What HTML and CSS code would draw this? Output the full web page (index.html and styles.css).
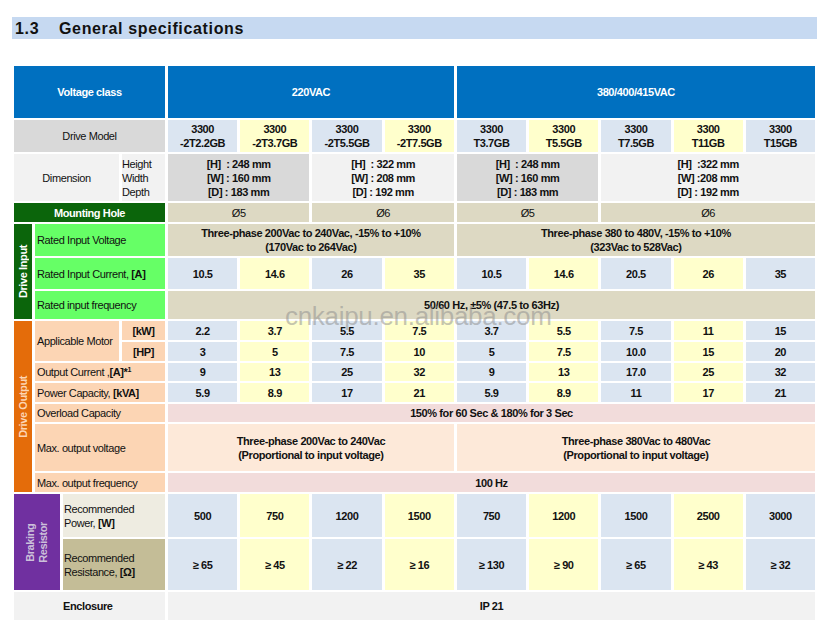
FILE: index.html
```html
<!DOCTYPE html>
<html>
<head>
<meta charset="utf-8">
<link rel="stylesheet" href="styles.css">
</head>
<body>
<div class="page">
  <h1 class="title"><span class="num">1.3</span><span>General specifications</span></h1>
  <div class="spec">
    <div class="hd s4"><span>Voltage class</span></div>
    <div class="hd s4"><span>220VAC</span></div>
    <div class="hd s5"><span>380/400/415VAC</span></div>

    <div class="lbl grey s4 center"><span>Drive Model</span></div>
    <div class="v b"><span>3300<br>-2T2.2GB</span></div>
    <div class="v y"><span>3300<br>-2T3.7GB</span></div>
    <div class="v b"><span>3300<br>-2T5.5GB</span></div>
    <div class="v y"><span>3300<br>-2T7.5GB</span></div>
    <div class="v b"><span>3300<br>T3.7GB</span></div>
    <div class="v y"><span>3300<br>T5.5GB</span></div>
    <div class="v b"><span>3300<br>T7.5GB</span></div>
    <div class="v y"><span>3300<br>T11GB</span></div>
    <div class="v b"><span>3300<br>T15GB</span></div>

    <div class="lbl light s3 center"><span>Dimension</span></div>
    <div class="lbl light hwd"><span>Height<br>Width<br>Depth</span></div>
    <div class="v g s2"><span>[H]&nbsp; : 248 mm<br>[W] : 160 mm<br>[D] : 183 mm</span></div>
    <div class="v l s2"><span>[H]&nbsp; : 322 mm<br>[W] : 208 mm<br>[D] : 192 mm</span></div>
    <div class="v g s2"><span>[H]&nbsp; : 248 mm<br>[W] : 160 mm<br>[D] : 183 mm</span></div>
    <div class="v l s3"><span>[H]&nbsp; :322 mm<br>[W] :208 mm<br>[D] : 192 mm</span></div>

    <div class="lbl mount s4 center"><span>Mounting Hole</span></div>
    <div class="v t s2 reg"><span>Ø5</span></div>
    <div class="v t s2 reg"><span>Ø6</span></div>
    <div class="v t s2 reg"><span>Ø5</span></div>
    <div class="v t s3 reg"><span>Ø6</span></div>

    <div class="side side-in"><span>Drive Input</span></div>
    <div class="lbl in s3"><span>Rated Input Voltage</span></div>
    <div class="v t s4"><span>Three-phase 200Vac to 240Vac, -15% to +10%<br>(170Vac to 264Vac)</span></div>
    <div class="v t s5"><span>Three-phase 380 to 480V, -15% to +10%<br>(323Vac to 528Vac)</span></div>
    <div class="lbl in s3"><span>Rated Input Current, <b>[A]</b></span></div>
    <div class="v b"><span>10.5</span></div>
    <div class="v y"><span>14.6</span></div>
    <div class="v b"><span>26</span></div>
    <div class="v y"><span>35</span></div>
    <div class="v b"><span>10.5</span></div>
    <div class="v y"><span>14.6</span></div>
    <div class="v b"><span>20.5</span></div>
    <div class="v y"><span>26</span></div>
    <div class="v b"><span>35</span></div>
    <div class="lbl in s3"><span>Rated input frequency</span></div>
    <div class="v t s9"><span>50/60 Hz, ±5% (47.5 to 63Hz)</span></div>

    <div class="side side-out"><span>Drive Output</span></div>
    <div class="lbl out motor"><span>Applicable Motor</span></div>
    <div class="lbl out unit"><span>[kW]</span></div>
    <div class="v b"><span>2.2</span></div>
    <div class="v y"><span>3.7</span></div>
    <div class="v b"><span>5.5</span></div>
    <div class="v y"><span>7.5</span></div>
    <div class="v b"><span>3.7</span></div>
    <div class="v y"><span>5.5</span></div>
    <div class="v b"><span>7.5</span></div>
    <div class="v y"><span>11</span></div>
    <div class="v b"><span>15</span></div>
    <div class="lbl out unit"><span>[HP]</span></div>
    <div class="v b"><span>3</span></div>
    <div class="v y"><span>5</span></div>
    <div class="v b"><span>7.5</span></div>
    <div class="v y"><span>10</span></div>
    <div class="v b"><span>5</span></div>
    <div class="v y"><span>7.5</span></div>
    <div class="v b"><span>10.0</span></div>
    <div class="v y"><span>15</span></div>
    <div class="v b"><span>20</span></div>
    <div class="lbl out s3"><span>Output Current ,<b>[A]*<sup>1</sup></b></span></div>
    <div class="v b"><span>9</span></div>
    <div class="v y"><span>13</span></div>
    <div class="v b"><span>25</span></div>
    <div class="v y"><span>32</span></div>
    <div class="v b"><span>9</span></div>
    <div class="v y"><span>13</span></div>
    <div class="v b"><span>17.0</span></div>
    <div class="v y"><span>25</span></div>
    <div class="v b"><span>32</span></div>
    <div class="lbl out s3"><span>Power Capacity, <b>[kVA]</b></span></div>
    <div class="v b"><span>5.9</span></div>
    <div class="v y"><span>8.9</span></div>
    <div class="v b"><span>17</span></div>
    <div class="v y"><span>21</span></div>
    <div class="v b"><span>5.9</span></div>
    <div class="v y"><span>8.9</span></div>
    <div class="v b"><span>11</span></div>
    <div class="v y"><span>17</span></div>
    <div class="v b"><span>21</span></div>
    <div class="lbl out s3"><span>Overload Capacity</span></div>
    <div class="v pink s9"><span>150% for 60 Sec &amp; 180% for 3 Sec</span></div>
    <div class="lbl out s3"><span>Max. output voltage</span></div>
    <div class="v peach s4"><span>Three-phase 200Vac to 240Vac<br>(Proportional to input voltage)</span></div>
    <div class="v peach s5"><span>Three-phase 380Vac to 480Vac<br>(Proportional to input voltage)</span></div>
    <div class="lbl out s3"><span>Max. output frequency</span></div>
    <div class="v pink s9"><span>100 Hz</span></div>

    <div class="side side-br"><span>Braking<br>Resistor</span></div>
    <div class="lbl rp s2"><span>Recommended<br>Power, <b>[W]</b></span></div>
    <div class="v b"><span>500</span></div>
    <div class="v y"><span>750</span></div>
    <div class="v b"><span>1200</span></div>
    <div class="v y"><span>1500</span></div>
    <div class="v b"><span>750</span></div>
    <div class="v y"><span>1200</span></div>
    <div class="v b"><span>1500</span></div>
    <div class="v y"><span>2500</span></div>
    <div class="v b"><span>3000</span></div>
    <div class="lbl rr s2"><span>Recommended<br>Resistance, <b>[Ω]</b></span></div>
    <div class="v b"><span>≥ 65</span></div>
    <div class="v y"><span>≥ 45</span></div>
    <div class="v b"><span>≥ 22</span></div>
    <div class="v y"><span>≥ 16</span></div>
    <div class="v b"><span>≥ 130</span></div>
    <div class="v y"><span>≥ 90</span></div>
    <div class="v b"><span>≥ 65</span></div>
    <div class="v y"><span>≥ 43</span></div>
    <div class="v b"><span>≥ 32</span></div>

    <div class="lbl light s4 enc"><span><b>Enclosure</b></span></div>
    <div class="v l s9"><span>IP 21</span></div>
    <div class="watermark">cnkaipu.en.alibaba.com</div>
  </div>
</div>
</body>
</html>
```

FILE: styles.css
```css
html, body {
  margin: 0;
  padding: 0;
  background: #ffffff;
}
body {
  font-family: "Liberation Sans", Arial, sans-serif;
  color: #111;
}
.page {
  width: 831px;
  padding-top: 17px;
}
.title {
  margin: 0 14px 0 12px;
  height: 22px;
  background: #c6d9f1;
  font-family: "Liberation Sans", Arial, sans-serif;
  font-weight: bold;
  font-size: 16px;
  letter-spacing: 0.65px;
  line-height: 24px;
  color: #111;
  display: flex;
  padding-left: 3px;
}
.title .num {
  width: 44px;
}
.spec {
  position: relative;
  margin: 27px 0 0 14px;
  width: 801px;
  display: grid;
  grid-template-columns: 18px 25px 56px 43px repeat(9, 1fr);
  grid-template-rows: 52px 32px 47px 19px 32px 31px 28px 19px 19px 18px 19px 18px 47px 19px 43px 51px 28px;
  column-gap: 3px;
  row-gap: 2px;
  font-size: 11px;
  letter-spacing: -0.4px;
  line-height: 14px;
}
.spec > div {
  display: flex;
  align-items: center;
}
.s2 { grid-column: span 2; }
.s3 { grid-column: span 3; }
.s4 { grid-column: span 4; }
.s5 { grid-column: span 5; }
.s9 { grid-column: span 9; }

.hd {
  background: #0070c0;
  color: #fff;
  font-weight: bold;
  justify-content: center;
}
.lbl {
  padding-left: 2px;
}
.center {
  justify-content: center;
  padding-left: 0;
}
.grey { background: #d9d9d9; }
.light { background: #f2f2f2; }
.hwd {
  padding-left: 0;
}
.mount {
  background: #0b650b;
  color: #fff;
  font-weight: bold;
}
.v {
  justify-content: center;
  text-align: center;
  font-weight: bold;
}
.v.reg { font-weight: normal; }
.b { background: #dbe5f1; }
.y { background: #ffffcc; }
.g { background: #d9d9d9; }
.l { background: #f2f2f2; }
.t { background: #ddd9c3; }
.pink { background: #f2dcdb; }
.peach { background: #fde9d9; }

.side {
  grid-column: 1;
  justify-content: center;
  font-weight: bold;
}
.side span {
  writing-mode: vertical-rl;
  transform: rotate(180deg);
  line-height: 13px;
  text-align: center;
}
.side-in {
  grid-row: 5 / span 3;
  background: #0b650b;
  color: #fff;
}
.side-out {
  grid-row: 8 / span 7;
  background: #e46c0a;
  color: #fcd5b4;
}
.side-br {
  grid-column: 1 / span 2;
  grid-row: 15 / span 2;
  background: #7030a0;
  color: #ccc0da;
}
.in { background: #66ff66; }
.out { background: #fcd5b4; }
.motor {
  grid-column: span 2;
  grid-row: span 2;
}
.unit {
  font-weight: bold;
  justify-content: center;
  padding-left: 0;
}
.rp { background: #eeece1; padding-left: 1px; }
.rr { background: #c4bd97; padding-left: 1px; }
.enc { padding-left: 49px; }
sup {
  font-size: 7px;
  line-height: 0;
  vertical-align: 4px;
}
.watermark {
  position: absolute;
  left: 271px;
  top: 235px;
  font-family: "Liberation Sans", Arial, sans-serif;
  font-size: 26px;
  line-height: 30px;
  letter-spacing: -0.3px;
  color: rgba(140, 140, 140, 0.5);
  pointer-events: none;
}
```
